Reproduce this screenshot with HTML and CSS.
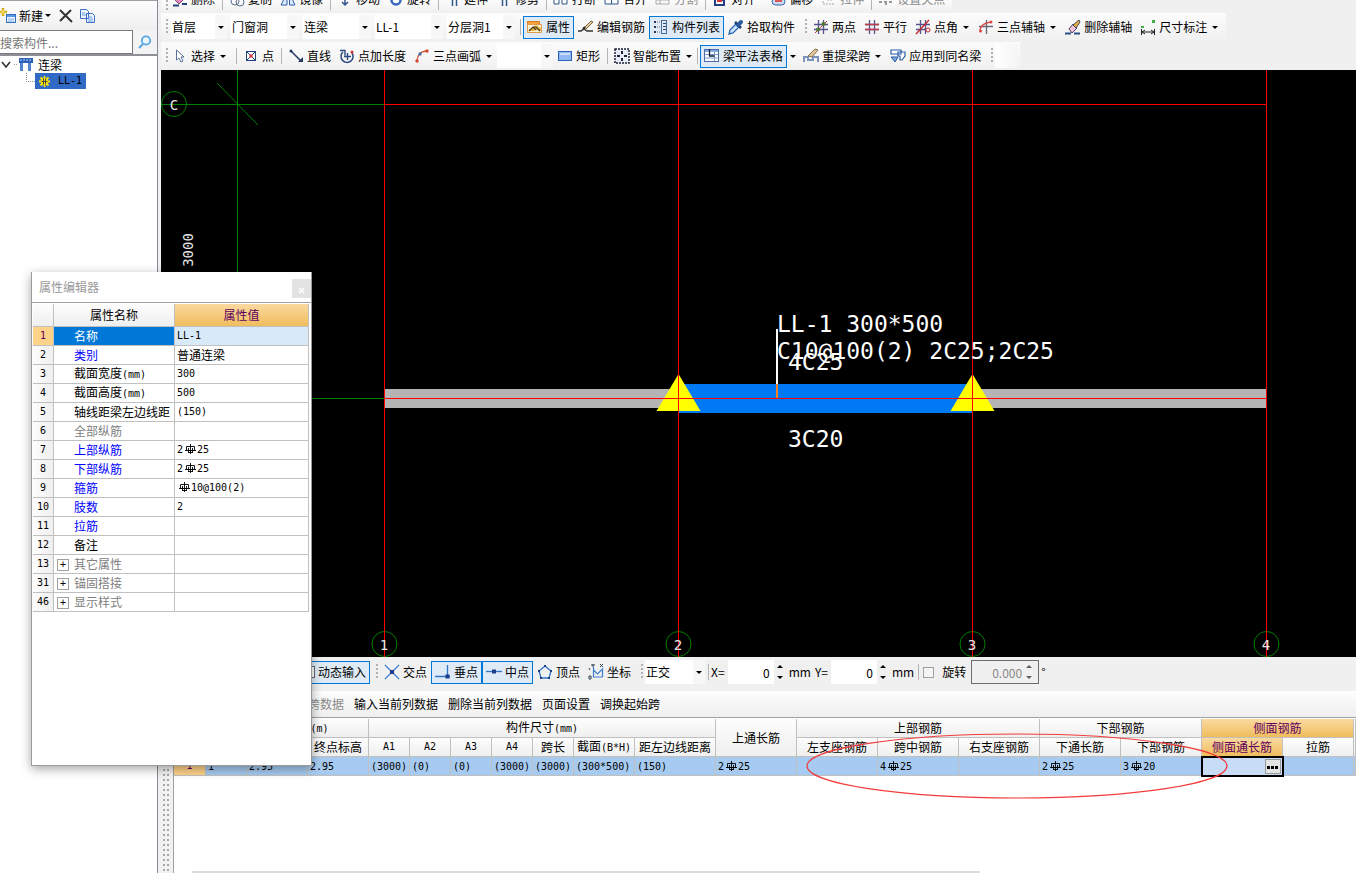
FILE: index.html
```html
<!DOCTYPE html>
<html lang="zh-CN">
<head>
<meta charset="utf-8">
<title>连梁</title>
<link rel="stylesheet" href="styles.css">
</head>
<body>
<svg class="defs" aria-hidden="true">
  <defs>
    <symbol id="rebar" viewBox="0 0 12 11"><path d="M6.500 0v10M2.500 2.500h8v4h-8zM1 6.500h11M4.500 4v5M8.500 4v5M4 8.500h5" fill="none" stroke="#000" stroke-width=".9"/></symbol>
    <symbol id="gridlines" viewBox="0 0 16 16"><path d="M1 5.500h14M1 10.500h14M5.500 1v14M10.500 1v14" fill="none" stroke="#55558c" stroke-width="1.300"/></symbol>
  </defs>
</svg>
<div class="app">
  <aside class="side">
    <div class="side-tools">
      <button class="side-btn"><svg width="17" height="16" viewBox="0 0 17 16"><path d="M3 0v8M-1 4h8" stroke="#c9a400" stroke-width="2.500"/><path d="M3 1v6M0 4h6" stroke="#ffe680"/><rect x="6.500" y="6.500" width="9" height="8" fill="#eaf3ff" stroke="#2f6fc0"/><path d="M7 8h8" stroke="#5b95dd" stroke-width="2"/><path d="M8 11h6M8 13h6" stroke="#8ab2e6"/></svg><span>新建</span><i class="caret"></i></button>
      <button class="side-btn" aria-label="删除"><svg width="14" height="14" viewBox="0 0 14 14"><path d="M1 1l12 12M12 1L1 12" stroke="#333" stroke-width="2" fill="none"/></svg></button>
      <button class="side-btn" aria-label="复制"><svg width="16" height="14" viewBox="0 0 16 14"><path d="M.5.500h6l2 2v7h-8zM6.500 4.500h6l2 2v7h-8z" fill="#edf5ff" stroke="#3a6fc4"/><path d="M2 4h3M2 6h4M8 8h4M8 10h5M8 12h5" stroke="#6d9ee0"/></svg></button>
    </div>
    <div class="search"><input type="text" placeholder="搜索构件..." aria-label="搜索构件"><button aria-label="搜索"><svg width="14" height="14" viewBox="0 0 14 14"><circle cx="8" cy="5.500" r="4.200" fill="#eaf6ff" stroke="#56a5de" stroke-width="1.800"/><path d="M5 9l-4 4" stroke="#56a5de" stroke-width="2"/></svg></button></div>
    <ul class="tree">
      <li class="tree-root"><svg width="33" height="16" viewBox="0 0 33 16"><path d="M2 5l4 5 4-5" fill="none" stroke="#333" stroke-width="1.600"/><path d="M14 7.500h4" stroke="#999" stroke-dasharray="1 1"/><path d="M19 1h14v5H19z" fill="#2c62b5"/><path d="M20 3h12" stroke="#b7d0f2" stroke-dasharray="2 1"/><path d="M21.500 6v8M29.500 6v8" stroke="#4d84d2" stroke-width="3"/></svg><span>连梁</span></li>
      <li class="tree-leaf"><svg class="elbow" width="9" height="16" viewBox="0 0 9 16"><path d="M.5 0v8.500H9" fill="none" stroke="#888" stroke-dasharray="1 1"/></svg><span class="picked"><svg width="11" height="11" viewBox="0 0 11 11"><path d="M5.500 0v11M0 5.500h11M1.500 1.500l8 8M9.500 1.500l-8 8" stroke="#ffe500" stroke-width="1.800"/><circle cx="5.500" cy="5.500" r="3.500" fill="#ffe500"/><path d="M4.500 2.500v6M6.500 2.500v6M2.500 5.500h6" stroke="#444"/></svg><span class="mono">LL-1</span></span></li>
    </ul>
  </aside>

  <main class="main">
    <header class="bars">
      <div class="row row-cut">
        <i class="grip"></i>
        <button class="tb"><svg class="ic" viewBox="0 0 16 16"><path d="M3 9l8-7 3 4-7 7z" fill="#e08ac0" stroke="#8a4a80"/><path d="M1 14.500h6M10 13h5" stroke="#24447c" stroke-width="2"/></svg>删除</button><i class="sep"></i>
        <button class="tb"><svg class="ic" viewBox="0 0 16 16"><circle cx="6" cy="10" r="4" fill="none" stroke="#5a7090"/><circle cx="11" cy="11" r="4" fill="none" stroke="#5a7090"/></svg>复制</button>
        <button class="tb"><svg class="ic" viewBox="0 0 16 16"><path d="M7 2v12H1zM9.500 2v12H15z" fill="#dbe9fb" stroke="#2f5fa8"/></svg>镜像</button><i class="sep"></i>
        <button class="tb"><svg class="ic" viewBox="0 0 16 16"><path d="M8 1v13M5 11l3 3 3-3" fill="none" stroke="#31588c" stroke-width="1.500"/></svg>移动</button>
        <button class="tb"><svg class="ic" viewBox="0 0 16 16"><circle cx="8" cy="9" r="4.500" fill="none" stroke="#3767bd" stroke-width="2.500"/></svg>旋转</button><i class="sep"></i>
        <button class="tb"><svg class="ic" viewBox="0 0 16 16"><path d="M7.500 2v13M11.500 2v13" stroke="#31588c" stroke-width="1.500"/></svg>延伸</button>
        <button class="tb"><svg class="ic" viewBox="0 0 16 16"><path d="M6.500 2v13M10.500 5v10" stroke="#31588c" stroke-width="1.500"/></svg>修剪</button><i class="sep"></i>
        <button class="tb"><svg class="ic" viewBox="0 0 16 16"><path d="M1 8h5v5H1zM9 8h5v5H9z" fill="none" stroke="#31588c"/></svg>打断</button>
        <button class="tb"><svg class="ic" viewBox="0 0 16 16"><path d="M1 8h13v5H1zM7.500 8v5" fill="none" stroke="#31588c"/></svg>合并</button>
        <button class="tb" disabled><svg class="ic" viewBox="0 0 16 16"><path d="M1 9h13v4H1zM5 4v9" fill="none" stroke="#aaa"/></svg>分割</button><i class="sep"></i>
        <button class="tb"><svg class="ic" viewBox="0 0 16 16"><path d="M3 1v13h9V9H6" fill="none" stroke="#223f86" stroke-width="2"/><path d="M5 10h5" stroke="#d33" stroke-width="2"/></svg>对齐<i class="gap"></i></button>
        <button class="tb"><svg class="ic" viewBox="0 0 16 16"><rect x="2" y="7" width="13" height="7" rx="3.500" fill="#c7dcf7" stroke="#3c5f9c"/><path d="M5 10h7" stroke="#d55" stroke-width="2"/></svg>偏移</button>
        <button class="tb" disabled><svg class="ic" viewBox="0 0 16 16"><path d="M2 4v9h12M6 9h6" fill="none" stroke="#aaa" stroke-dasharray="2 1"/></svg>拉伸</button><i class="sep"></i>
        <button class="tb" disabled><svg class="ic" viewBox="0 0 16 16"><path d="M1 11h14M8 6v8" stroke="#999" stroke-dasharray="3 2" stroke-width="2"/></svg>设置夹点</button>
      </div>

      <div class="row">
        <i class="grip"></i>
        <span class="combo short"><select aria-label="楼层"><option>首层</option></select></span>
        <span class="combo"><select aria-label="构件类型"><option>门窗洞</option></select></span>
        <span class="combo"><select aria-label="构件"><option>连梁</option></select></span>
        <span class="combo"><select aria-label="名称"><option>LL-1</option></select></span>
        <span class="combo"><select aria-label="分层"><option>分层洞1</option></select></span>
        <i class="sep wide"></i>
        <button class="tb on"><svg class="ic" viewBox="0 0 16 16"><path d="M.5 2.500h12v3h-12z" fill="#f6a33c" stroke="#d8791b"/><path d="M.5 5.500v8h14v-8z" fill="#fff3da" stroke="#e09a4e"/><path d="M1 12l5-4 3-2 5 3v3l-5-1-3 1z" fill="#e6b53c"/><path d="M2 12l4-4h3l4 4M6 8l3 3" fill="none" stroke="#4a3f25" stroke-width="1.200"/></svg>属性</button>
        <button class="tb"><svg class="ic" viewBox="0 0 16 16"><path d="M0 12h3l3-2 3 2h6" fill="none" stroke="#333" stroke-width="1.500"/><path d="M5 10l8-8 2 1-7 7z" fill="#e9cf9b" stroke="#77603c"/><path d="M5 10l2-2" stroke="#222" stroke-width="2"/></svg>编辑钢筋</button>
        <button class="tb on"><svg class="ic" viewBox="0 0 16 16"><path d="M1 3h2M1 8h2M1 13h2" stroke="#335" stroke-width="2"/><path d="M4 3h3M4 8h3M4 13h3" stroke="#667" stroke-dasharray="1 1"/><rect x="8.500" y="1.500" width="5" height="13" fill="#dfeafa" stroke="#4b6aa0"/><path d="M10 4.500h3M10 7.500h3M10 10.500h3" stroke="#346"/></svg>构件列表</button>
        <button class="tb"><svg class="ic" viewBox="0 0 16 16"><path d="M1 15l1-4 6-6 3 3-6 6z" fill="#cfe6ff" stroke="#2667b0" stroke-width="1.300"/><path d="M7 3l6 6" stroke="#1e3e6e" stroke-width="2.500"/><path d="M10 6l3-3" stroke="#2a5ca0" stroke-width="4" stroke-linecap="round"/></svg>拾取构件</button>
        <i class="grip next"></i>
        <button class="tb"><svg class="ic" viewBox="0 0 16 16"><use href="#gridlines"/><path d="M2 14L14 2" stroke="#b33"/><circle cx="10.500" cy="5" r="2" fill="#4a7a30"/><circle cx="5" cy="10.500" r="2" fill="#4a7a30"/></svg>两点</button>
        <button class="tb"><svg class="ic" viewBox="0 0 16 16"><use href="#gridlines"/><path d="M1 5.500h14M1 10.500h14" stroke="#c03a4a" stroke-width="1.300"/></svg>平行</button>
        <button class="tb"><svg class="ic" viewBox="0 0 16 16"><use href="#gridlines"/><path d="M1 15L14 1" stroke="#c22" stroke-width="1.300"/><circle cx="13" cy="11" r="2" fill="#fff" stroke="#c22"/></svg>点角<i class="caret"></i></button>
        <button class="tb"><svg class="ic" viewBox="0 0 16 16"><path d="M8.500 1v14M1 7.500h14" stroke="#667" stroke-width="1.300"/><path d="M2 12c0-5 3-8 11-9" fill="none" stroke="#d44" stroke-width="1.500"/><circle cx="2.500" cy="12" r="1.500" fill="#d44"/><circle cx="13" cy="3" r="1.500" fill="#d44"/></svg>三点辅轴<i class="caret"></i></button>
        <button class="tb"><svg class="ic" viewBox="0 0 16 16"><path d="M4 10l4-5 4 4-5 5z" fill="#f5c5dc" stroke="#446"/><path d="M8 6l6-5 1 2-4 6z" fill="#e7b43a" stroke="#446"/><path d="M0 14.500h6M9 14.500h6" stroke="#2d4f88" stroke-width="2"/></svg>删除辅轴</button>
        <button class="tb"><svg class="ic" viewBox="0 0 16 16"><path d="M1 7h3v2H1zM12 1h3v3h-3z" fill="#3faf46"/><path d="M1.500 10v6M14.500 10v6M2 13h12M5 11l-3 2 3 2M11 11l3 2-3 2" fill="none" stroke="#222"/></svg>尺寸标注<i class="caret"></i></button>
      </div>

      <div class="row">
        <i class="grip"></i>
        <button class="tb"><svg class="ic" viewBox="0 0 16 16"><path d="M4.500 2v10l2.500-2 2 4 2-1-2-4h3z" fill="#fff" stroke="#5b6f96"/></svg>选择<i class="caret"></i></button>
        <i class="sep late"></i>
        <button class="tb"><svg class="ic" viewBox="0 0 16 16"><rect x="3.500" y="3.500" width="9" height="9" fill="#fff" stroke="#26407c"/><path d="M4 4l8 8M12 4l-8 8" stroke="#26407c"/><path d="M6.500 6.500h3v3h-3z" fill="#d33"/></svg>点</button>
        <i class="sep"></i>
        <button class="tb"><svg class="ic" viewBox="0 0 16 16"><path d="M3 3l10 10" stroke="#24365e" stroke-width="1.500"/><path d="M10 14h5V9z" fill="#24365e"/><circle cx="3" cy="3" r="1.500" fill="#24365e"/></svg>直线</button>
        <button class="tb"><svg class="ic" viewBox="0 0 16 16"><path d="M4 4a6 6 0 1 0 9 1" fill="none" stroke="#2b4a80" stroke-width="1.500"/><path d="M1 2.500h5v5M8.500 5v7M5 8.500h7" fill="none" stroke="#2b4a80" stroke-width="1.400"/><circle cx="13" cy="4" r="1.500" fill="#c33"/></svg>点加长度</button>
        <button class="tb"><svg class="ic" viewBox="0 0 16 16"><path d="M3 14C3 8 6 3 13 3" fill="none" stroke="#cf5a44" stroke-width="1.500"/><circle cx="3" cy="13" r="1.700" fill="#d44a30"/><circle cx="6" cy="6" r="1.700" fill="#4a6fb0"/><circle cx="13" cy="3" r="1.700" fill="#d44a30"/></svg>三点画弧<i class="caret"></i></button>
        <span class="combo arc"><select aria-label="弧类型"><option></option></select></span>
        <button class="tb"><svg class="ic" viewBox="0 0 16 16"><rect x="1.500" y="3.500" width="13" height="9" fill="#8fb8f5" stroke="#2d5fc0"/><path d="M3 5h10v2H3z" fill="#c9defc"/></svg>矩形</button>
        <i class="sep"></i>
        <button class="tb"><svg class="ic" viewBox="0 0 16 16"><rect x="1" y="1" width="14" height="14" fill="#e6eefa" stroke="#223" stroke-width="1.500" stroke-dasharray="2 1"/><path d="M8 3v3M8 10v3M3 8h3M10 8h3" stroke="#223" stroke-width="2"/></svg>智能布置<i class="caret"></i></button>
        <i class="sep tight"></i>
        <button class="tb on"><svg class="ic" viewBox="0 0 16 16"><rect x=".5" y="1.500" width="14" height="12" fill="#fff" stroke="#4c6ca8"/><path d="M1 3h13" stroke="#86a9df" stroke-width="2"/><path d="M1 6.500h13M1 10h13M10.500 4v9" stroke="#7f9ccd"/><path d="M5.500 1v7h5" fill="none" stroke="#123" stroke-width="1.300"/></svg>梁平法表格</button><button class="drop" aria-label="更多"><i class="caret"></i></button>
        <button class="tb"><svg class="ic" viewBox="0 0 16 16"><path d="M1 14V9h4v3h5V9h5v5" fill="none" stroke="#7c93bb" stroke-width="2"/><path d="M5 8l7-7 3 1-6 7z" fill="#e3c79c" stroke="#8a7050"/></svg>重提梁跨<i class="caret"></i></button>
        <button class="tb"><svg class="ic" viewBox="0 0 16 16"><path d="M1 2h10v4H1zM8 4h7v4l-3 4h-2V8H8z" fill="#fff" stroke="#2d5da8" stroke-width="1.200"/><path d="M1 9h7l-3 5z" fill="#7ea6de" stroke="#2d5da8"/></svg>应用到同名梁</button>
        <i class="grip next"></i><i class="blank"></i>
      </div>
    </header>

    <section class="canvas" aria-label="绘图区">
      <svg width="100%" height="100%">
        <g fill="none" stroke="#008000">
          <path d="M0 34.500h224M76.500 0v587M0 328.500h224M56 13l41 42"/>
          <circle cx="13" cy="34" r="12.500"/>
          <circle cx="223.500" cy="574" r="12.500"/><circle cx="517.500" cy="574" r="12.500"/><circle cx="811.500" cy="574" r="12.500"/><circle cx="1105.500" cy="574" r="12.500"/>
        </g>
        <path d="M224 319h882v19H224z" fill="#b4b4b4"/>
        <path d="M518 314h294v29H518z" fill="#007af4"/>
        <path d="M517.500 304l22 37h-44zM811.500 304l22 37h-44z" fill="#ff0"/>
        <path d="M224 34.500h882M224 328.500h882M223.500 0v587M517.500 0v587M811.500 0v587M1105.500 0v587" stroke="red" fill="none"/>
        <path d="M616 259v55" stroke="#fff" stroke-width="2"/><path d="M616 314v14" stroke="#f08020" stroke-width="2"/>
        <g class="cad">
          <text x="616" y="262">LL-1 300*500</text>
          <text x="616" y="289">C10@100(2) 2C25;2C25</text>
          <text x="627" y="300">4C25</text>
          <text x="627" y="377">3C20</text>
        </g>
        <g class="axis">
          <text x="13" y="40">C</text><text x="223" y="580">1</text><text x="517" y="580">2</text><text x="811" y="580">3</text><text x="1105" y="580">4</text>
          <text x="27" y="180" transform="rotate(-90 27 180)" dy="5">3000</text>
        </g>
      </svg>
    </section>

    <section class="snap">
      <button class="tb on"><svg class="ic" viewBox="0 0 16 16"><rect x="1.500" y="2.500" width="14" height="11" fill="#fff" stroke="#667"/></svg>动态输入</button>
      <i class="grip"></i>
      <button class="tb"><svg class="ic" viewBox="0 0 16 16"><path d="M1 1l14 14M1 15L15 1" stroke="#3b7fd0" stroke-width="1.300"/><path d="M6 6h4v4H6z" fill="#1c3f85"/></svg>交点</button>
      <button class="tb on"><svg class="ic" viewBox="0 0 16 16"><path d="M0 12.500h15M12.500 1v12" stroke="#2f74c8" stroke-width="1.300"/><path d="M10.500 10.500h4v4h-4z" fill="#1c3f85"/></svg>垂点</button>
      <button class="tb on"><svg class="ic" viewBox="0 0 16 16"><path d="M0 7.500h16" stroke="#2f74c8" stroke-width="1.300"/><path d="M6 5.500h4v4H6z" fill="#1c3f85"/></svg>中点</button>
      <button class="tb"><svg class="ic" viewBox="0 0 16 16"><path d="M8 2l6 5-2 7H4L2 7z" fill="none" stroke="#2f74c8" stroke-width="1.300"/><path d="M7 1h2v2H7zM1 6h2v2H1zM13 6h2v2h-2zM3 13h2v2H3zM11 13h2v2h-2z" fill="#1c3f85"/></svg>顶点</button>
      <button class="tb"><svg class="ic" viewBox="0 0 16 16"><path d="M5.500 3v10h9M5.500 6l4 4 5-5v8" fill="none" stroke="#3b7fd0" stroke-width="1.200"/><path d="M12 0l3 3M15 0l-3 3M1 4l1 2M1 12v3h2v-3zM4 0h2v2H4z" fill="none" stroke="#345"/></svg>坐标</button>
      <i class="grip late"></i>
      <span class="combo ortho"><select aria-label="正交"><option>正交</option></select></span>
      <i class="sep"></i>
      <label class="num">X= <input type="text" value="0"><i class="spin"></i></label><span class="unit">mm</span>
      <label class="num">Y= <input type="text" value="0"><i class="spin"></i></label><span class="unit">mm</span>
      <i class="sep"></i>
      <label class="turn"><input type="checkbox">旋转</label>
      <span class="angle"><input type="text" value="0.000" disabled aria-label="旋转角度"><i class="spin"></i></span><span>°</span>
    </section>

    <section class="sheet">
      <div class="splitter"></div>
      <div class="sheet-body">
        <nav class="cmds"><button disabled>复制跨数据</button><button>输入当前列数据</button><button>删除当前列数据</button><button>页面设置</button><button>调换起始跨</button></nav>
        <div class="table-wrap">
          <table class="beam">
            <colgroup><col class="w32"><col class="w41"><col class="w61"><col class="w61"><col class="w41"><col class="w41"><col class="w41"><col class="w41"><col class="w41"><col class="w61"><col class="w81"><col class="w81"><col class="w81"><col class="w81"><col class="w81"><col class="w81"><col class="w81"><col class="w81"><col class="w71"><col></colgroup>
            <thead>
              <tr><th rowspan="2"></th><th rowspan="2">跨号</th><th colspan="2">标高<span class="mono">(m)</span></th><th colspan="7">构件尺寸<span class="mono">(mm)</span></th><th rowspan="2">上通长筋</th><th colspan="3">上部钢筋</th><th colspan="2">下部钢筋</th><th colspan="2" class="hot">侧面钢筋</th><th rowspan="2"></th></tr>
              <tr><th>起点标高</th><th>终点标高</th><th class="mono">A1</th><th class="mono">A2</th><th class="mono">A3</th><th class="mono">A4</th><th>跨长</th><th>截面<span class="mono">(B*H)</span></th><th>距左边线距离</th><th>左支座钢筋</th><th>跨中钢筋</th><th>右支座钢筋</th><th>下通长筋</th><th>下部钢筋</th><th class="hot">侧面通长筋</th><th>拉筋</th></tr>
            </thead>
            <tbody>
              <tr><th class="rowhead">1</th><td>1</td><td>2.95</td><td>2.95</td><td>(3000)</td><td>(0)</td><td>(0)</td><td>(3000)</td><td>(3000)</td><td>(300*500)</td><td>(150)</td><td>2<svg class="rb"><use href="#rebar"/></svg>25</td><td></td><td>4<svg class="rb"><use href="#rebar"/></svg>25</td><td></td><td>2<svg class="rb"><use href="#rebar"/></svg>25</td><td>3<svg class="rb"><use href="#rebar"/></svg>20</td><td class="edit"><button aria-label="选择钢筋"><svg width="12" height="3" viewBox="0 0 12 3"><path d="M0 0h3v3H0zM4 0h3v3H4zM8 0h3v3H8z"/></svg></button></td><td></td><td></td></tr>
            </tbody>
          </table>
          <svg class="mark" width="424" height="68" viewBox="0 0 424 68"><ellipse cx="212" cy="34" rx="210" ry="32" fill="none" stroke="#f33b3b" stroke-width="1.200"/></svg>
        </div>
        <div class="hscroll"></div>
      </div>
    </section>
  </main>
</div>

<div class="dialog" role="dialog" aria-labelledby="dlg">
  <div class="dlg-title"><span id="dlg">属性编辑器</span><button aria-label="关闭"><svg width="7" height="7" viewBox="0 0 7 7"><path d="M1 1l5 5M6 1L1 6" stroke="#fff" stroke-width="1.500"/></svg></button></div>
  <div class="dlg-body">
    <table class="props">
      <colgroup><col class="c-no"><col class="c-name"><col></colgroup>
      <thead><tr><th></th><th>属性名称</th><th class="hot">属性值</th></tr></thead>
      <tbody>
        <tr class="sel"><th>1</th><td>名称</td><td>LL-1</td></tr>
        <tr class="key"><th>2</th><td>类别</td><td class="cjk">普通连梁</td></tr>
        <tr><th>3</th><td>截面宽度<span class="mono">(mm)</span></td><td>300</td></tr>
        <tr><th>4</th><td>截面高度<span class="mono">(mm)</span></td><td>500</td></tr>
        <tr><th>5</th><td>轴线距梁左边线距</td><td>(150)</td></tr>
        <tr class="dim"><th>6</th><td>全部纵筋</td><td></td></tr>
        <tr class="key"><th>7</th><td>上部纵筋</td><td>2<svg class="rb"><use href="#rebar"/></svg>25</td></tr>
        <tr class="key"><th>8</th><td>下部纵筋</td><td>2<svg class="rb"><use href="#rebar"/></svg>25</td></tr>
        <tr class="key"><th>9</th><td>箍筋</td><td><svg class="rb"><use href="#rebar"/></svg>10@100(2)</td></tr>
        <tr class="key"><th>10</th><td>肢数</td><td>2</td></tr>
        <tr class="key"><th>11</th><td>拉筋</td><td></td></tr>
        <tr><th>12</th><td>备注</td><td></td></tr>
        <tr class="dim fold"><th>13</th><td><button aria-label="展开">+</button>其它属性</td><td></td></tr>
        <tr class="dim fold"><th>31</th><td><button aria-label="展开">+</button>锚固搭接</td><td></td></tr>
        <tr class="dim fold"><th>46</th><td><button aria-label="展开">+</button>显示样式</td><td></td></tr>
      </tbody>
    </table>
  </div>
</div>
</body>
</html>
```
FILE: styles.css
```css
* { box-sizing: border-box; }
body {
  margin: 0;
  height: 100vh;
  overflow: hidden;
  background: #f0f0f0;
  color: #000;
  font: 12px/16px "Noto Sans CJK SC", sans-serif;
}
button, input, select { font: inherit; color: inherit; margin: 0; padding: 0; border: 0; background: none; border-radius: 0; }
button { white-space: nowrap; }
svg { flex: none; }
.defs { position: absolute; width: 0; height: 0; }
.mono { font-family: "DejaVu Sans Mono", monospace; font-size: 10px; }
.app { display: flex; height: 100vh; }

/* component list */
.side { flex: none; width: 158px; background: #fff; border-right: 1px solid #858b96; overflow: hidden; }
.side-tools { display: flex; align-items: center; gap: 7px; height: 30px; border-top: 1px solid #a0a0a0; background: linear-gradient(#fdfdfd, #efefef); }
.side-btn { display: flex; align-items: center; gap: 2px; }
.side-btn .caret { margin-left: -2px; }
.search { display: flex; height: 26px; border-bottom: 2px solid #8d9096; background: #f3f3f3; }
.search input { width: 133px; height: 24px; padding: 0; border: 1px solid #7a7a7a; border-left: 0; background: #fff; }
.search input::placeholder { color: #777; opacity: 1; }
.search button { flex: 1; display: flex; align-items: center; justify-content: center; }
.tree { list-style: none; margin: 0; padding: 1px 0; }
.tree li { display: flex; align-items: center; height: 16px; }
.tree-root { gap: 5px; }
.tree-leaf { padding-left: 26px; }
.picked { display: flex; align-items: center; gap: 8px; height: 16px; padding: 0 4px; background: #316ac5; }

/* toolbars */
.main { flex: 1; min-width: 0; display: flex; flex-direction: column; padding-left: 3px; }
.bars { flex: none; height: 70px; overflow: hidden; }
.row { display: flex; align-items: center; width: max-content; height: 28px; margin-bottom: 1px; padding: 0 3px 0 5px; background: linear-gradient(#fcfcfc, #f0f0f0); white-space: nowrap; }
.row-cut { height: 12px; align-items: flex-end; padding-bottom: 2px; }
.grip { flex: none; width: 2px; height: 16px; background: repeating-linear-gradient(#b0b0b0 0 2px, transparent 2px 4px); }
.grip.next { margin: 0 2px 0 6px; }
.row-cut .sep, .row-cut .grip { height: 14px; }
.sep { flex: none; width: 1px; height: 16px; margin: 0 2px 0 3px; background: #b5b5b5; }
.sep.wide, .sep.late { margin-left: 5px; }
.sep.tight { margin-left: 0; }
.tb { flex: none; display: flex; align-items: center; gap: 3px; height: 23px; padding: 0 3px; border: 1px solid transparent; }
.tb.on { border-color: #0078d7; background: #deebf6; }
.tb:disabled, .cmds button:disabled { color: #8a8a8a; }
.ic { width: 16px; height: 16px; }
.gap { width: 4px; }
.caret { flex: none; width: 9px; height: 3px; }
.caret::after, .combo::after { content: ""; display: block; width: 0; border: 3px solid transparent; border-top-color: #000; border-bottom: 0; margin: 0 auto; }
.drop { width: 12px; height: 23px; }
.drop .caret { display: block; margin: auto; }
.combo { flex: none; position: relative; width: 68px; height: 24px; margin-left: 4px; background: linear-gradient(90deg, #fff calc(100% - 12px), #f7f7f7 0); }
.combo.short { width: 56px; margin-left: 3px; }
.combo.arc { width: 56px; margin-left: 0; }
.combo::after { position: absolute; right: 3px; top: 11px; }
.combo select { width: 100%; height: 24px; appearance: none; padding-left: 1px; }
.blank { width: 22px; height: 24px; background: linear-gradient(90deg, #fff, #f5f5f5); }

/* drawing */
.canvas { flex: 1; min-height: 0; background: #000; overflow: hidden; }
.canvas svg { display: block; }
.cad { font: 23px "DejaVu Sans Mono", monospace; fill: #fff; }
.axis { font: 14px "DejaVu Sans Mono", monospace; fill: #e8e8e8; text-anchor: middle; }

/* snapping bar */
.snap { flex: none; display: flex; align-items: center; height: 30px; padding-left: 134px; white-space: nowrap; }
.snap .grip { margin: 0 2px 0 6px; }
.snap .grip.late { margin-right: 0; }
.combo.ortho { width: 60px; margin-left: 2px; }
.num { display: flex; align-items: center; height: 24px; }
.num input { width: 46px; height: 24px; margin-left: 3px; padding-right: 4px; background: #fff; text-align: right; }
.spin { width: 13px; height: 22px; display: flex; flex-direction: column; justify-content: space-between; align-items: center; padding: 4px 0; }
.spin::before, .spin::after { content: ""; border: 3px solid transparent; }
.spin::before { border-bottom-color: #000; border-top: 0; }
.spin::after { border-top-color: #000; border-bottom: 0; }
.unit { margin: 0 4px 0 2px; }
.unit + .sep { margin-left: 0; }
.turn { display: flex; align-items: center; gap: 8px; margin: 0 5px 0 2px; }
.turn input { appearance: none; width: 11px; height: 11px; border: 1px solid #a0a0a0; background: #f4f4f4; }
.angle { display: flex; align-items: center; width: 68px; height: 24px; margin-right: 2px; border: 1px solid #6d6d6d; color: #8a8a8a; }
.angle input { width: 50px; height: 20px; text-align: right; }
.angle .spin { opacity: .6; }

/* span table */
.sheet { flex: none; display: flex; height: 186px; padding-top: 4px; }
.splitter { flex: none; width: 13px; border-right: 1px solid #a0a0a0; background: repeating-linear-gradient(#f2f2f2 0 3px, transparent 3px 5px), repeating-linear-gradient(90deg, #f2f2f2 0 2px, #a8a8a8 2px 4px, #f2f2f2 4px 6px, #a8a8a8 6px 8px, #f2f2f2 8px 20px); }
.sheet-body { flex: 1; min-width: 0; display: flex; flex-direction: column; background: #fff; }
.cmds { display: flex; align-items: center; gap: 10px; height: 26px; padding-left: 110px; background: linear-gradient(#fdfdfd, #efefef); }
.table-wrap { flex: 1; position: relative; border-top: 1px solid #a0a0a0; }
.beam, .props { table-layout: fixed; border-collapse: separate; border-spacing: 0; }
.beam { width: 100%; margin-top: 1px; }
.w32 { width: 32px; } .w41 { width: 41px; } .w61 { width: 61px; } .w71 { width: 71px; } .w81 { width: 81px; }
.beam th, .beam td, .props th, .props td { height: 19px; padding: 0; border: solid #c0c0c0; border-width: 0 1px 1px 0; font-weight: 400; line-height: 16px; white-space: nowrap; overflow: hidden; }
.beam th { background: linear-gradient(#fdfdfd, #efefef); }
.beam td { padding: 1px 0 0 2px; background: #a6caf0; }
.beam td, .props td:last-child, .beam .rowhead, .props tbody th { font-family: "DejaVu Sans Mono", monospace; font-size: 10px; }
.beam .rowhead { background: #ffd28a; color: #600060; }
.beam .hot, .props .hot { background: linear-gradient(#fad9a0, #f0bd5c); color: #600060; }
.rb { width: 12px; height: 11px; margin: 0 1px; vertical-align: -2px; }
.beam .edit { padding: 0; background: #c8ddf5; outline: 2px solid #000; outline-offset: -1px; text-align: right; }
.edit button { width: 16px; height: 15px; margin-right: 1px; border: 1px solid #999; background: #e4e4e4; line-height: 10px; vertical-align: middle; }
.mark { position: absolute; left: 631px; top: 14px; pointer-events: none; }
.hscroll { height: 2px; margin: 0 376px 0 18px; background: #dcdcdc; }

/* property editor */
.dialog { position: absolute; left: 31px; top: 272px; width: 281px; height: 494px; display: flex; flex-direction: column; background: #fff; border: solid #9a9a9a; border-width: 0 1px 1px; box-shadow: 0 3px 10px rgba(0, 0, 0, .35); }
.dlg-title { display: flex; justify-content: space-between; align-items: center; height: 30px; padding-left: 7px; color: #999; }
.dlg-title button { width: 19px; height: 19px; margin-top: 3px; background: #e3e3e3; line-height: 16px; }
.dlg-body { flex: 1; border-top: 1px solid #a0a0a0; padding: 1px 2px 0 1px; }
.props { width: 100%; }
.c-no { width: 21px; } .c-name { width: 121px; }
.props thead th { height: 23px; background: linear-gradient(#fdfdfd, #efefef); }
.props tbody th { background: linear-gradient(90deg, #fdfdfd, #efefef); }
.props td { padding-left: 20px; }
.props td:last-child { padding-left: 2px; }
.props .cjk:last-child { font: 12px/16px "Noto Sans CJK SC", sans-serif; }
.key td:nth-child(2) { color: #00f; }
.dim td:nth-child(2) { color: #808080; }
.props .sel td:nth-child(2) { background: #0078d7; color: #fff; }
.sel td:last-child { background: #d8e9f8; }
.props .sel th { background: #ffd28a; color: #600060; }
.props .fold td:nth-child(2) { padding-left: 3px; }
.fold button { width: 12px; height: 12px; margin-right: 5px; border: 1px solid #a0a0a0; color: #000; font: 10px/10px "DejaVu Sans Mono", monospace; vertical-align: 1px; }
```
